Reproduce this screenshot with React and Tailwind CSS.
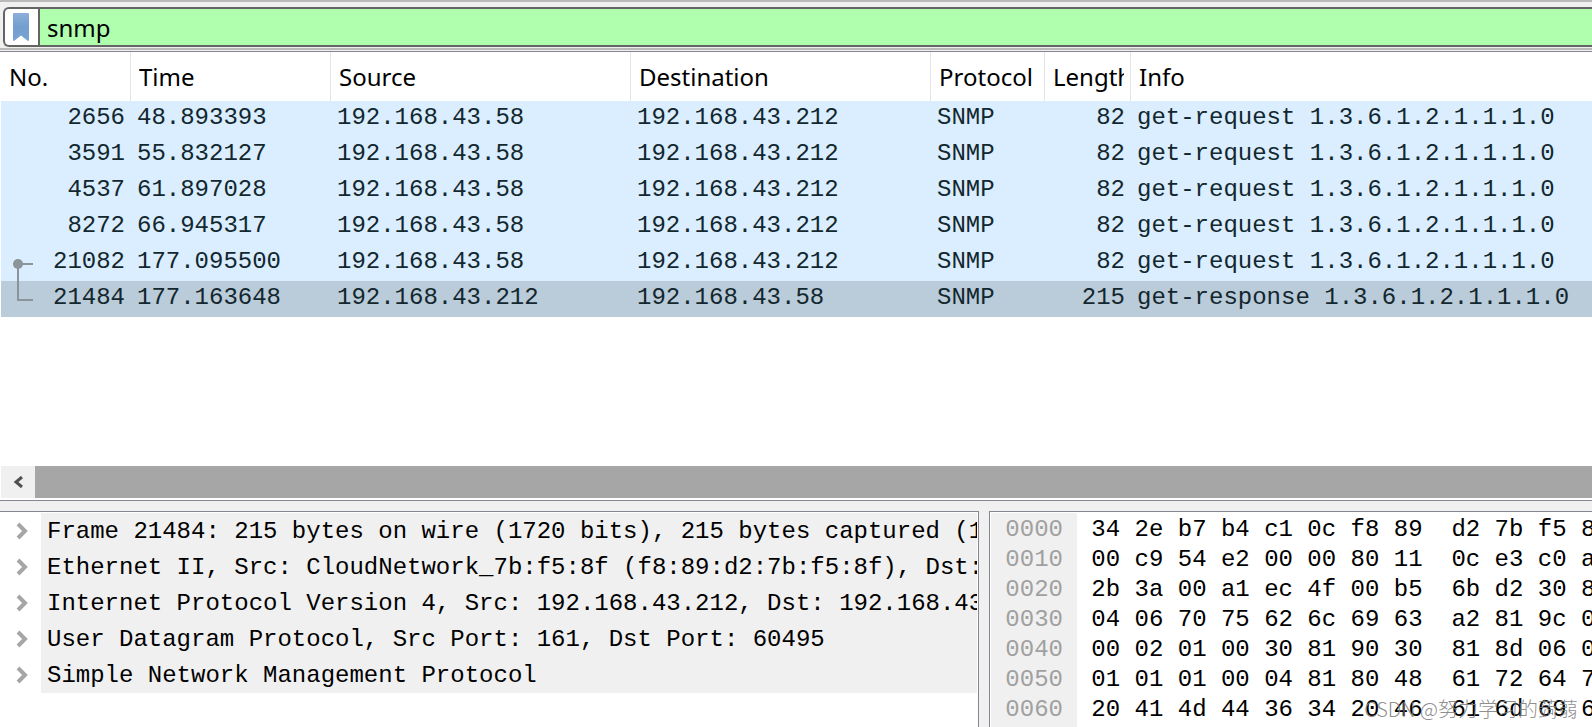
const columns = ['No.', 'Time', 'Source', 'Destination', 'Protocol', 'Length', 'Info'];

const REQUEST = 'get-request 1.3.6.1.2.1.1.1.0';

const packets = [
  { no: 2656, time: '48.893393', src: '192.168.43.58', dst: '192.168.43.212', length: 82, info: REQUEST },
  { no: 3591, time: '55.832127', src: '192.168.43.58', dst: '192.168.43.212', length: 82, info: REQUEST },
  { no: 4537, time: '61.897028', src: '192.168.43.58', dst: '192.168.43.212', length: 82, info: REQUEST },
  { no: 8272, time: '66.945317', src: '192.168.43.58', dst: '192.168.43.212', length: 82, info: REQUEST },
  { no: 21082, time: '177.095500', src: '192.168.43.58', dst: '192.168.43.212', length: 82, info: REQUEST, link: 'start' },
  {
    no: 21484,
    time: '177.163648',
    src: '192.168.43.212',
    dst: '192.168.43.58',
    length: 215,
    info: 'get-response 1.3.6.1.2.1.1.1.0',
    link: 'end',
    selected: true,
  },
];

const layers = [
  'Frame 21484: 215 bytes on wire (1720 bits), 215 bytes captured (1720 bits)',
  'Ethernet II, Src: CloudNetwork_7b:f5:8f (f8:89:d2:7b:f5:8f), Dst:',
  'Internet Protocol Version 4, Src: 192.168.43.212, Dst: 192.168.43.58',
  'User Datagram Protocol, Src Port: 161, Dst Port: 60495',
  'Simple Network Management Protocol',
];

const hexRows = [
  ['0000', '34 2e b7 b4 c1 0c f8 89  d2 7b f5 8f'],
  ['0010', '00 c9 54 e2 00 00 80 11  0c e3 c0 a8'],
  ['0020', '2b 3a 00 a1 ec 4f 00 b5  6b d2 30 81'],
  ['0030', '04 06 70 75 62 6c 69 63  a2 81 9c 02'],
  ['0040', '00 02 01 00 30 81 90 30  81 8d 06 08'],
  ['0050', '01 01 01 00 04 81 80 48  61 72 64 77'],
  ['0060', '20 41 4d 44 36 34 20 46  61 6d 69 6c'],
];

const mono = "font-['Liberation_Mono',monospace] text-[24px]";

function FilterBar() {
  return (
    <div className="border-y-2 border-[#b9b9b9] bg-[#f0f0f0] pt-[5px] pb-px pl-[3px]">
      <div className="flex h-10 overflow-hidden rounded-l-md border-2 border-r-0 border-[#646464] bg-white">
        <button type="button" aria-label="Bookmarks" className="flex w-[35px] shrink-0 items-center justify-center border-r-2 border-[#646464] pr-px">
          <svg width="16" height="28" viewBox="0 0 16 28">
            <defs>
              <linearGradient id="ribbon" x1="0" y1="0" x2="0" y2="1">
                <stop offset="0" stopColor="#8bafd9" />
                <stop offset="0.5" stopColor="#729fcf" />
                <stop offset="1" stopColor="#79a3d4" />
              </linearGradient>
            </defs>
            <path d="M0 1Q0 0 1 0h14q1 0 1 1v26q0 1-1 1L8 22.500 1 28q-1 0-1-1z" fill="url(#ribbon)" />
          </svg>
        </button>
        <input
          type="text"
          aria-label="Display filter"
          defaultValue="snmp"
          className="min-w-0 flex-1 bg-[#afffaf] px-[7px] pt-0.5 text-[24px] text-black outline-none"
        />
      </div>
    </div>
  );
}

// bracket that ties a request to its response
function RelatedMark({ kind }) {
  return (
    <svg className="absolute left-3 top-0" width="22" height="36" viewBox="0 0 22 36" stroke="#8a9499" strokeWidth="2" fill="none">
      {kind === 'start' ? (
        <>
          <circle cx="5" cy="19" r="5" fill="#8a9499" stroke="none" />
          <path d="M5 19h15M5 19v17" />
        </>
      ) : (
        <path d="M5 0v19h15" />
      )}
    </svg>
  );
}

function PacketList() {
  return (
    <section className="flex min-h-0 flex-col border-y border-[#828790] bg-white">
      <div className="min-h-0 flex-1 overflow-hidden pl-px">
        <table className="w-full table-fixed border-separate border-spacing-0">
          <colgroup>
            <col className="w-[130px]" />
            <col className="w-[200px]" />
            <col className="w-[300px]" />
            <col className="w-[300px]" />
            <col className="w-[114px]" />
            <col className="w-[86px]" />
            <col />
          </colgroup>
          <thead>
            <tr>
              {columns.map((name) => (
                <th
                  key={name}
                  className="h-[49px] border-r border-[#e5e5e5] pl-2 pr-1.5 text-left text-[24px] leading-8 font-normal last:border-r-0"
                >
                  <span className="block overflow-hidden whitespace-nowrap">{name}</span>
                </th>
              ))}
            </tr>
          </thead>
          <tbody className={mono}>
            {packets.map((p) => (
              <tr
                key={p.no}
                className={
                  p.selected
                    ? 'bg-[#bacbd9] text-[#12272e] [&>td]:pt-px [&>td]:pb-[3px] [&>td]:leading-8'
                    : 'bg-[#daeeff] text-[#12272e] [&>td]:pt-px [&>td]:pb-[3px] [&>td]:leading-8'
                }
              >
                <td className="relative pr-1.5 text-right">
                  {p.link && <RelatedMark kind={p.link} />}
                  {p.no}
                </td>
                <td className="pl-1.5">{p.time}</td>
                <td className="pl-1.5">{p.src}</td>
                <td className="pl-1.5">{p.dst}</td>
                <td className="pl-1.5">SNMP</td>
                <td className="pr-1.5 text-right">{p.length}</td>
                <td className="overflow-hidden pl-1.5 whitespace-nowrap">{p.info}</td>
              </tr>
            ))}
          </tbody>
        </table>
      </div>
      <div className="mb-0.5 ml-px flex h-8 shrink-0 bg-[#a6a6a6]">
        <button type="button" aria-label="Scroll left" className="flex w-[34px] items-center justify-center bg-[#f0f0f0] pr-px">
          <svg width="10" height="12" viewBox="0 0 10 12" fill="none" stroke="#505050" strokeWidth="3">
            <path d="M9 1 3 6l6 5" />
          </svg>
        </button>
      </div>
    </section>
  );
}

function PacketDetails() {
  return (
    <section className="min-w-0 overflow-hidden border-t border-r border-[#828790] bg-white pt-px pr-px">
      <ul className={mono}>
        {layers.map((text) => (
          <li key={text} className="flex h-9">
            <button type="button" aria-label="Expand" className="flex w-[41px] shrink-0 items-center justify-center pl-0.5">
              <svg width="12" height="18" viewBox="0 0 12 18" fill="none" stroke="#a6a6a6" strokeWidth="4">
                <path d="M2 2l7 7-7 7" />
              </svg>
            </button>
            <span className="min-w-0 flex-1 overflow-hidden bg-[#f0f0f0] pt-0.5 pl-1.5 leading-[34px] whitespace-pre">{text}</span>
          </li>
        ))}
      </ul>
    </section>
  );
}

function PacketBytes() {
  return (
    <section className={`flex min-w-0 overflow-hidden border-t border-l border-[#828790] bg-white pt-px pl-px ${mono} leading-[30px]`}>
      <div className="w-[86px] shrink-0 bg-[#f0f0f0] pt-0.5 pl-3.5 text-[#a0a0a0]">
        {hexRows.map(([offset]) => (
          <div key={offset}>{offset}</div>
        ))}
      </div>
      <div className="min-w-0 flex-1 overflow-hidden pt-0.5 pl-3.5 whitespace-pre">
        {hexRows.map(([offset, bytes]) => (
          <div key={offset}>{bytes}</div>
        ))}
      </div>
    </section>
  );
}

export default function App() {
  return (
    <main className="relative flex h-screen flex-col overflow-hidden bg-[#f0f0f0] font-['Noto_Sans',sans-serif] text-black">
      <FilterBar />
      <div className="grid min-h-0 flex-1 grid-rows-[25fr_12fr] gap-2.5 pt-px">
        <PacketList />
        <div className="grid min-h-0 grid-cols-[13fr_8fr] gap-2.5">
          <PacketDetails />
          <PacketBytes />
        </div>
      </div>
      <p className="pointer-events-none absolute right-3.5 bottom-1.5 font-['Noto_Sans_CJK_SC',sans-serif] text-[20px] leading-6 font-light text-[#808080]/90">
        CSDN @努力学习的蒟蒻
      </p>
    </main>
  );
}
